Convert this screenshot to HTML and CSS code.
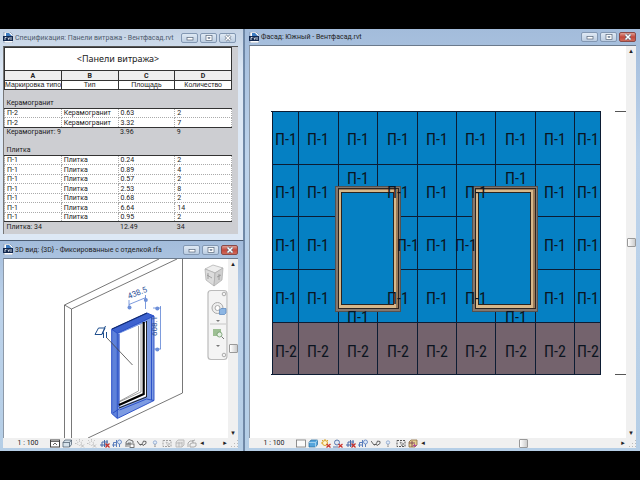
FILE: index.html
```html
<!DOCTYPE html>
<html lang="ru">
<head>
	<meta charset="UTF-8">
	<title>Вентфасад</title>
	<link rel="stylesheet" href="styles.css">
</head>
<body>
	<svg class="sprite" aria-hidden="true">
		<symbol id="rvt" viewBox="0 0 10 11">
			<path d="M1 0h6l3 3v8H1z" fill="#fff" stroke="#6b7f9c" stroke-width=".6"/>
			<path d="M3 1h3l3 3H3z" fill="#3d7bc0"/>
			<path d="M0 4h10v5H0z" fill="#12284f"/>
			<path d="M2 8V5.500h1.500M5 5.500l.7 2L6.500 5.500M8 5v3" stroke="#fff" stroke-width=".8" fill="none"/>
		</symbol>
		<symbol id="min" viewBox="0 0 10 8"><rect x="2" y="3.500" width="6" height="2.500" fill="#fff" stroke="#56657a" stroke-width=".7"/></symbol>
		<symbol id="max" viewBox="0 0 10 8"><rect x="2" y="1.500" width="6" height="5" fill="#fff" stroke="#56657a" stroke-width=".7"/><rect x="4" y="3.300" width="2" height="1.400" fill="#b9cbe0" stroke="#56657a" stroke-width=".5"/></symbol>
		<symbol id="close" viewBox="0 0 10 8"><path d="M2.500 1.500l5 5M7.500 1.500l-5 5" stroke="#56657a" stroke-width="2.600"/><path d="M2.500 1.500l5 5M7.500 1.500l-5 5" stroke="#fff" stroke-width="1.500"/></symbol>
		<symbol id="detail" viewBox="0 0 10 9"><rect x=".5" y="1" width="9" height="7" fill="#fff" stroke="#444"/><path d="M1 2.500h8M3 6l2-2 2 2" stroke="#444" fill="none" stroke-width=".8"/></symbol>
		<symbol id="sheet" viewBox="0 0 10 9"><rect x=".5" y="1" width="9" height="7" fill="#fafafa" stroke="#777" stroke-width=".8"/></symbol>
		<symbol id="box" viewBox="0 0 10 9"><path d="M1 3.500l2-2.500h6.500v4.500l-2 2.500H1z" fill="#d6e2ea" stroke="#456" stroke-width=".7"/><path d="M1 3.500h6.500V8M7.500 3.500l2-2.500" fill="none" stroke="#456" stroke-width=".7"/></symbol>
		<symbol id="boxblue" viewBox="0 0 10 9"><path d="M1 3.500l2-2.500h6.500v4.500l-2 2.500H1z" fill="#55a5dc" stroke="#226a9e" stroke-width=".7"/><path d="M1 3.500h6.500V8M7.500 3.500l2-2.500" fill="none" stroke="#bfe2f7" stroke-width=".7"/></symbol>
		<symbol id="sunoff" viewBox="0 0 10 9"><circle cx="4.500" cy="4.500" r="2" fill="none" stroke="#bbb" stroke-dasharray="1 1"/><path d="M4.500 0v1.500M0 4.500h1.500M1.200 1.200l1 1M7.800 1.200l-1 1M6 5.500l3 3M9 5.500l-3 3" stroke="#aaa" stroke-width=".7"/></symbol>
		<symbol id="sun" viewBox="0 0 10 9"><circle cx="4" cy="4" r="2.500" fill="#fff6cf" stroke="#dba52a"/><path d="M4 0v1M0 4h1M1 1l1 1M7 1L6 2" stroke="#dba52a"/><path d="M5.500 5l4 3.500M9.500 5l-4 3.500" stroke="#c9302a" stroke-width="1.200"/></symbol>
		<symbol id="shade" viewBox="0 0 10 9"><circle cx="4" cy="3.500" r="2.500" fill="#dfe8f5" stroke="#5a78ae"/><path d="M0 8h5" stroke="#5a78ae"/><path d="M5.500 5l4 3.500M9.500 5l-4 3.500" stroke="#c9302a" stroke-width="1.200"/></symbol>
		<symbol id="cropoff" viewBox="0 0 10 9"><path d="M0 6h8M2 8V3h6M4.500 1v7M7 1v6" stroke="#4969a8" fill="none"/><path d="M5.500 4.500l4 4M9.500 4.500l-4 4" stroke="#c9302a" stroke-width="1.200"/></symbol>
		<symbol id="crop" viewBox="0 0 10 9"><path d="M0 6h5M1.500 8V3.500H5M4.500 1v7" stroke="#5b7fbd" fill="none"/><circle cx="7.500" cy="3" r="2" fill="#dce9fa" stroke="#5b7fbd" stroke-width=".8"/><path d="M7.500 5v3" stroke="#5b7fbd"/></symbol>
		<symbol id="lock" viewBox="0 0 10 9"><path d="M1 8V3l3-2.500L8 2v2" fill="#e6eaec" stroke="#555" stroke-width=".8"/><path d="M3 8V4h3M1 5h4" stroke="#555" stroke-width=".7" fill="none"/><rect x="5" y="5" width="4" height="3.500" fill="#fff" stroke="#555" stroke-width=".8"/></symbol>
		<symbol id="glasses" viewBox="0 0 10 9"><path d="M0 2l3 4 1.500-1L6 6.500l3-2V2.500L6.500 2 5.500 4.500M3 6l3-1" fill="none" stroke="#555" stroke-width=".9"/></symbol>
		<symbol id="bulb" viewBox="0 0 10 9"><circle cx="5" cy="3.500" r="1.700" fill="#e3edf9" stroke="#88a2cc" stroke-width=".8"/><path d="M4.200 6h1.600M4.400 7.500h1.200" stroke="#777" stroke-width=".8"/></symbol>
		<symbol id="region" viewBox="0 0 10 9"><rect x="1" y="1.500" width="8" height="6" fill="none" stroke="#555" stroke-dasharray="2 1"/><path d="M4 3l2 4 .6-1.600L8 5z" fill="#fff" stroke="#555" stroke-width=".6"/></symbol>
		<symbol id="model" viewBox="0 0 10 9"><path d="M1 8V3l2-2h6v5L7 8zM1 4h6M4 3v5M7 3v5" fill="#ddd" stroke="#777" stroke-width=".8"/></symbol>
		<symbol id="analytic" viewBox="0 0 10 9"><path d="M1 8V3l2-2h6v5L7 8z" fill="#e6cf91" stroke="#8a6a3c" stroke-width=".8"/><path d="M1 4h6M4 2v6" stroke="#7b4650" stroke-width=".9"/><path d="M6.500 5v3M5 6.500h3.500" stroke="#b24c9a"/></symbol>
		<symbol id="displace" viewBox="0 0 10 9"><path d="M1 8V4l2-2h3v2M3 8V5l2-1h4v3L7 8zM5 2l3-1" fill="none" stroke="#999" stroke-width=".8"/></symbol>
	</svg>

	<main class="workspace">
		<section class="window window-pale schedule">
			<header class="titlebar">
				<svg class="doc"><use href="#rvt"/></svg>
				<h1>Спецификация: Панели витража - Вентфасад.rvt</h1>
				<button aria-label="Свернуть"><svg><use href="#min"/></svg></button>
				<button aria-label="Развернуть"><svg><use href="#max"/></svg></button>
				<button aria-label="Закрыть"><svg><use href="#close"/></svg></button>
			</header>
			<div class="sheet">
				<table>
					<thead>
						<tr class="caption"><th colspan="4">&lt;Панели витража&gt;</th></tr>
						<tr class="letters"><th>A</th><th>B</th><th>C</th><th>D</th></tr>
						<tr class="names"><th>Маркировка типо</th><th>Тип</th><th>Площадь</th><th>Количество</th></tr>
					</thead>
					<tbody>
						<tr class="blank"><td colspan="4"></td></tr>
						<tr class="group"><td colspan="4">Керамогранит</td></tr>
						<tr><td>П-2</td><td>Керамогранит</td><td>0.63</td><td>2</td></tr>
						<tr><td>П-2</td><td>Керамогранит</td><td>3.32</td><td>7</td></tr>
						<tr class="total"><td colspan="2">Керамогранит: 9</td><td>3.96</td><td>9</td></tr>
					</tbody>
					<tbody>
						<tr class="blank"><td colspan="4"></td></tr>
						<tr class="group"><td colspan="4">Плитка</td></tr>
						<tr><td>П-1</td><td>Плитка</td><td>0.24</td><td>2</td></tr>
						<tr><td>П-1</td><td>Плитка</td><td>0.89</td><td>4</td></tr>
						<tr><td>П-1</td><td>Плитка</td><td>0.57</td><td>2</td></tr>
						<tr><td>П-1</td><td>Плитка</td><td>2.53</td><td>8</td></tr>
						<tr><td>П-1</td><td>Плитка</td><td>0.68</td><td>2</td></tr>
						<tr><td>П-1</td><td>Плитка</td><td>6.64</td><td>14</td></tr>
						<tr><td>П-1</td><td>Плитка</td><td>0.95</td><td>2</td></tr>
						<tr class="total"><td colspan="2">Плитка: 34</td><td>12.49</td><td>34</td></tr>
					</tbody>
				</table>
			</div>
		</section>

		<section class="window view3d">
			<header class="titlebar">
				<svg class="doc"><use href="#rvt"/></svg>
				<h1>3D вид: {3D} - Фиксированные с отделкой.rfa</h1>
				<button aria-label="Свернуть"><svg><use href="#min"/></svg></button>
				<button aria-label="Развернуть"><svg><use href="#max"/></svg></button>
				<button class="close" aria-label="Закрыть"><svg><use href="#close"/></svg></button>
			</header>
			<div class="view">
				<svg class="drawing" viewBox="4 259 224 179" preserveAspectRatio="xMinYMin meet">
					<!-- wall -->
					<g fill="none" stroke="#555" stroke-width=".8">
						<path d="M64.500 438V305L159 259M71.500 438V309L177 259M64.500 305l7 4M182.500 259v134L88 438"/>
					</g>
					<!-- window frame -->
					<path d="M111.700 329.300L147 313l7 3v84.500l-36.700 18-5.600-5zM119 334v73l27.500-11V322z" fill="#7d9be2" fill-rule="evenodd"/>
					<path d="M119 334l25-11v72l-25 11z" fill="#fff"/>
					<path d="M111.700 329.300l5.600 4v85l-5.600-5z" fill="#5f82da"/>
					<path d="M147 313l7 3-36.700 17.300-5.600-4z" fill="#3d62cf"/>
					<path d="M111.700 329.300L147 313l7 3v84.500l-36.700 18-5.600-5zM117.300 418V333.300L154 316M111.700 329.300l5.600 4M119.500 410l27-11 7.500 1.500M113 413l6-4M151.500 317v83" fill="none" stroke="#2449c4" stroke-width=".9"/>
					<path d="M119 334v73" stroke="#2449c4" stroke-width="1.200"/>
					<path d="M112 329l35-16" stroke="#112a70" stroke-width="1.200"/>
					<path d="M138.500 326v65L120 401M141 324v68l-22 10" fill="none" stroke="#777" stroke-width=".7"/>
					<path d="M143.700 322v72L119 405" fill="none" stroke="#000" stroke-width="2.200"/>
					<path d="M119 408l27.500-11V321" fill="none" stroke="#111" stroke-width=".9"/>
					<!-- dimensions -->
					<g fill="none" stroke="#5d83d4" stroke-width=".8">
						<path d="M129 304.500l17-7M129 300v8M145.500 295v14M153 308h8M153 349h8M160.500 306v43"/>
					</g>
					<g fill="#6d8fd8"><circle cx="129.500" cy="307.500" r="2"/><circle cx="145.800" cy="300" r="2"/><circle cx="157.300" cy="308.500" r="2"/><circle cx="157.300" cy="349.500" r="2"/></g>
					<text class="dim" transform="translate(129 299) rotate(-22)">438.5</text>
					<text class="dim" transform="translate(157 336) rotate(-90)">608.1</text>
					<g fill="none" stroke="#1f4e8d">
						<path d="M95 334.500h7l3-6.500h-6.500zM102 334l3.500-8M103.500 333v5M102.500 334l1-1.500M106.500 332v6"/>
						<path d="M107 338l25.500 27" stroke="#444" stroke-width=".8"/>
					</g>
					<!-- view cube -->
					<g stroke="#aaa" stroke-width=".7">
						<path d="M205 269l8-4 10 3-8 5z" fill="#eee"/>
						<path d="M205 269l10 4-1 13-8-6z" fill="#dcdcdc"/>
						<path d="M215 273l8-5-1 12-8 6z" fill="#cfcfcf"/>
						<path d="M207 275l5 3M208 273v6M217 277l4-2M219 274v6" stroke="#888"/>
					</g>
					<!-- navigation bar -->
					<rect x="208" y="290.500" width="19" height="69" rx="3" fill="#f4f4f4" stroke="#bbb" stroke-width="1.200"/>
					<path d="M210 324h16" stroke="#bbb" stroke-width=".8"/>
					<g fill="none" stroke="#999" stroke-width=".8"><circle cx="224" cy="294" r="1.800"/><circle cx="224" cy="355" r="1.800"/></g>
					<circle cx="217.500" cy="308" r="5.500" fill="#eee" stroke="#aaa"/>
					<circle cx="217.500" cy="308" r="2.500" fill="#fff" stroke="#aaa"/>
					<path d="M219.500 310l1.500-1.500h5v4.500l-1.500 1.500h-5z" fill="#8db6e3" stroke="#5685bd" stroke-width=".7"/>
					<path d="M216 320h4l-2 2zM216 345h4l-2 2z" fill="#777"/>
					<path d="M213 329h8v7h-8z" fill="#9dbf93"/>
					<circle cx="219.500" cy="334.500" r="2.500" fill="#e6f0e4" stroke="#6f9b68" stroke-width=".8"/>
					<path d="M221.500 336.500l2.500 2.500" stroke="#777"/>
				</svg>
				<div class="scroll scroll-v">
					<button aria-label="Вверх">▴</button>
					<i class="thumb"></i>
					<button aria-label="Вниз">▾</button>
				</div>
			</div>
			<footer class="viewbar">
				<button class="scale">1 : 100</button>
				<div class="tools">
					<button aria-label="Детализация"><svg><use href="#detail"/></svg></button>
					<button aria-label="Стиль"><svg><use href="#box"/></svg></button>
					<button aria-label="Солнце"><svg><use href="#sunoff"/></svg></button>
					<button aria-label="Тени"><svg><use href="#sunoff"/></svg></button>
					<button aria-label="Обрезка"><svg><use href="#cropoff"/></svg></button>
					<button aria-label="Граница"><svg><use href="#crop"/></svg></button>
					<button aria-label="Блокировка"><svg><use href="#lock"/></svg></button>
					<button aria-label="Скрыть"><svg><use href="#glasses"/></svg></button>
					<button aria-label="Показать"><svg><use href="#bulb"/></svg></button>
					<button class="dim-icon" aria-label="Свойства"><svg><use href="#region"/></svg></button>
					<button class="dim-icon" aria-label="Модель"><svg><use href="#model"/></svg></button>
					<button aria-label="Смещение"><svg><use href="#displace"/></svg></button>
				</div>
				<div class="scroll scroll-h">
					<button aria-label="Влево">◂</button>
					<button aria-label="Вправо">▸</button>
				</div>
				<i class="grip"></i>
			</footer>
		</section>

		<section class="window facade">
			<header class="titlebar">
				<svg class="doc"><use href="#rvt"/></svg>
				<h1>Фасад: Южный - Вентфасад.rvt</h1>
				<button aria-label="Свернуть"><svg><use href="#min"/></svg></button>
				<button aria-label="Развернуть"><svg><use href="#max"/></svg></button>
				<button class="close" aria-label="Закрыть"><svg><use href="#close"/></svg></button>
			</header>
			<div class="view">
				<svg class="drawing" viewBox="250 46 376 392" preserveAspectRatio="xMinYMin meet">
					<rect x="272" y="111" width="329" height="211" fill="#0580c3"/>
					<rect x="272" y="322" width="329" height="52" fill="#74636d"/>
					<g fill="none" stroke="#0c1c33" shape-rendering="crispEdges">
						<path d="M271 111.500h330M272 164.500h329M272 216.500h329M272 269.500h329M272 322.500h329M271 374.500h330"/>
						<path d="M272.500 111v263M298.500 111v263M338.500 111v75M338.500 311v63M377.500 111v75M377.500 311v63M417.500 111v263M456.500 111v263M495.500 111v75M495.500 311v63M535.500 111v263M574.500 111v263M600.500 111v263"/>
						<path d="M615 111.500h11M615 374.500h11" stroke="#555"/>
					</g>
					<!-- windows -->
					<g id="opening">
						<rect x="335" y="186" width="66" height="126" fill="#55514f"/>
						<rect x="336" y="187" width="64" height="124" fill="#85776d"/>
						<rect x="338" y="188" width="61" height="121" fill="#2c2420"/>
						<rect x="339" y="189" width="59" height="119" fill="#9c7a58"/>
						<rect x="339" y="190" width="57" height="118" fill="#d8b88a"/>
						<rect x="341" y="192" width="53" height="113" fill="#2a2420"/>
						<rect x="342" y="193" width="51" height="111" fill="#0580c3"/>
					</g>
					<use href="#opening" x="137"/>
					<g class="tags">
						<text x="286" y="145">П-1</text><text x="318" y="145">П-1</text><text x="358" y="145">П-1</text><text x="398" y="145">П-1</text><text x="437" y="145">П-1</text><text x="476" y="145">П-1</text><text x="516" y="145">П-1</text><text x="555" y="145">П-1</text><text x="588" y="145">П-1</text>
						<text x="286" y="198">П-1</text><text x="318" y="198">П-1</text><text x="358" y="184">П-1</text><text x="398" y="198">П-1</text><text x="437" y="198">П-1</text><text x="476" y="198">П-1</text><text x="516" y="184">П-1</text><text x="555" y="198">П-1</text><text x="588" y="198">П-1</text>
						<text x="286" y="251">П-1</text><text x="318" y="251">П-1</text><text x="408" y="251">П-1</text><text x="437" y="251">П-1</text><text x="466" y="251">П-1</text><text x="555" y="251">П-1</text><text x="588" y="251">П-1</text>
						<text x="286" y="304">П-1</text><text x="318" y="304">П-1</text><text x="358" y="323">П-1</text><text x="398" y="304">П-1</text><text x="437" y="304">П-1</text><text x="476" y="304">П-1</text><text x="516" y="323">П-1</text><text x="555" y="304">П-1</text><text x="588" y="304">П-1</text>
						<text x="286" y="357">П-2</text><text x="318" y="357">П-2</text><text x="358" y="357">П-2</text><text x="398" y="357">П-2</text><text x="437" y="357">П-2</text><text x="476" y="357">П-2</text><text x="516" y="357">П-2</text><text x="555" y="357">П-2</text><text x="588" y="357">П-2</text>
					</g>
				</svg>
				<div class="scroll scroll-v">
					<button aria-label="Вверх">▴</button>
					<i class="thumb"></i>
					<button aria-label="Вниз">▾</button>
				</div>
			</div>
			<footer class="viewbar">
				<button class="scale">1 : 100</button>
				<div class="tools">
					<button aria-label="Детализация"><svg><use href="#sheet"/></svg></button>
					<button aria-label="Стиль"><svg><use href="#boxblue"/></svg></button>
					<button aria-label="Солнце"><svg><use href="#sun"/></svg></button>
					<button aria-label="Тени"><svg><use href="#shade"/></svg></button>
					<button aria-label="Обрезка"><svg><use href="#cropoff"/></svg></button>
					<button aria-label="Граница"><svg><use href="#crop"/></svg></button>
					<button aria-label="Скрыть"><svg><use href="#glasses"/></svg></button>
					<button aria-label="Показать"><svg><use href="#bulb"/></svg></button>
					<button aria-label="Свойства"><svg><use href="#region"/></svg></button>
					<button aria-label="Модель"><svg><use href="#analytic"/></svg></button>
				</div>
				<div class="scroll scroll-h">
					<button aria-label="Влево">◂</button>
					<i class="thumb"></i>
					<button aria-label="Вправо">▸</button>
				</div>
				<i class="grip"></i>
			</footer>
		</section>
	</main>
</body>
</html>
```

FILE: styles.css
```css
*{
	box-sizing: border-box;
	margin: 0;
	padding: 0;
}
body{
	background: #000;
	font-family: Roboto, "Liberation Sans", sans-serif;
	font-size: 7px;
	color: #222;
}
button{
	border: 0;
	background: none;
	font: inherit;
	color: inherit;
}
.sprite{
	position: absolute;
	width: 0;
	height: 0;
}
.workspace{
	height: 100vh;
	padding: 29px 0;
	display: grid;
	grid-template-columns: 244fr 396fr;
	grid-template-rows: 212fr 210fr;
}
.window{
	display: flex;
	flex-direction: column;
	min-width: 0;
	min-height: 0;
	padding: 0 5px 3px 3px;
	background: linear-gradient(#a3bcdb, #bdd3eb 30%, #b5cee6);
	border-right: 1px solid #7189a8;
}
.window-pale{
	background: linear-gradient(#c3d2e4, #dde8f5 20%);
	border-bottom: 1px solid #4b5c73;
}
.facade{
	grid-column: 2;
	grid-row: 1 / 3;
	padding: 0 4px 3px 4px;
	border-left: 1px solid #6d87a5;
	border-right: 0;
}
/* title bar */
.titlebar{
	display: flex;
	align-items: center;
	gap: 2px;
	height: 17px;
	flex: none;
}
.facade .titlebar{
	height: 16px;
}
.titlebar h1{
	flex: 1;
	min-width: 0;
	white-space: nowrap;
	font-size: 7px;
	font-weight: normal;
	line-height: 12px;
}
.doc{
	width: 10px;
	height: 11px;
}
.titlebar button{
	width: 17px;
	height: 10px;
	display: flex;
	align-items: center;
	justify-content: center;
	border: 1px solid #8398b3;
	border-radius: 2px;
	background: linear-gradient(#dfe9f4, #bccde1);
}
.titlebar button svg{
	width: 10px;
	height: 8px;
}
.titlebar .close{
	border-color: #8a4a48;
	background: linear-gradient(#dfa095, #c2473a 50%, #cf6a5a);
}
.window-pale .titlebar{
	padding-right: 2px;
}
.window-pale .titlebar h1{
	color: #4e5a6c;
}
/* schedule */
.sheet{
	flex: 1;
	padding-right: 6px;
	margin-bottom: 3px;
	background: #cdced2;
	border-top: 1px solid #555;
	border-left: 1px solid #777;
}
.sheet table{
	width: 100%;
	table-layout: fixed;
	border-collapse: collapse;
}
.sheet tr{
	height: 9px;
}
.sheet tr:nth-child(even){
	height: 10px;
}
.sheet th,
.sheet td{
	padding: 0 2px;
	font-size: 7px;
	line-height: 8px;
	text-align: left;
	white-space: nowrap;
	background: #fff;
	border: 1px dotted #aaa;
}
.sheet th{
	font-weight: normal;
	text-align: center;
	border: 1px solid #333;
}
.sheet .caption th{
	height: 23px;
	font-size: 9px;
	font-family: "Noto Sans", sans-serif;
}
.sheet .letters th{
	font-weight: bold;
	background: #eee;
}
.sheet .names th{
	padding: 0;
	font-family: "Liberation Sans", sans-serif;
}
.sheet .blank td,
.sheet .group td,
.sheet .total td{
	background: none;
	border: 0;
}
.sheet .group td{
	border-bottom: 1px solid #333;
}
.sheet .total td{
	border-top: 1px solid #333;
}
/* views */
.view{
	flex: 1;
	min-height: 0;
	display: flex;
	background: #fff;
	border-top: 1px solid #6b7a8c;
	border-left: 1px solid #8d99a8;
}
.drawing{
	flex: 1;
	min-width: 0;
	height: 100%;
}
.dim{
	font-size: 8px;
	fill: #2e5299;
}
.tags{
	font-family: "Roboto Condensed", Roboto, sans-serif;
	font-size: 16px;
	text-anchor: middle;
	fill: #0b1420;
}
/* scroll bars */
.scroll{
	display: flex;
	align-items: center;
	justify-content: space-between;
	background: #f0f0f0;
}
.scroll button{
	width: 10px;
	height: 10px;
	font-family: "DejaVu Sans", sans-serif;
	line-height: 10px;
	color: #222;
}
.scroll-v{
	flex: none;
	flex-direction: column;
	width: 10px;
}
.scroll-h{
	flex: 1;
}
.thumb{
	width: 9px;
	height: 9px;
	border: 1px solid #999;
	border-radius: 1px;
	background: linear-gradient(90deg, #fff, #ccc);
}
/* view control bar */
.viewbar{
	display: flex;
	align-items: center;
	flex: none;
	height: 10px;
	background: #f0f0f0;
}
.scale{
	width: 47px;
	padding-left: 3px;
	line-height: 10px;
}
.tools{
	display: flex;
	justify-content: space-between;
	width: 147px;
}
.facade .tools{
	width: 122px;
}
.tools button{
	width: 10px;
	height: 9px;
	display: flex;
}
.tools svg{
	width: 10px;
	height: 9px;
}
.dim-icon{
	opacity: .5;
}
.grip{
	width: 8px;
	height: 8px;
	background: radial-gradient(circle, #bbb 1px, transparent 1px) 0 0 / 3px 3px;
	clip-path: polygon(100% 0, 100% 100%, 0 100%);
}
```
